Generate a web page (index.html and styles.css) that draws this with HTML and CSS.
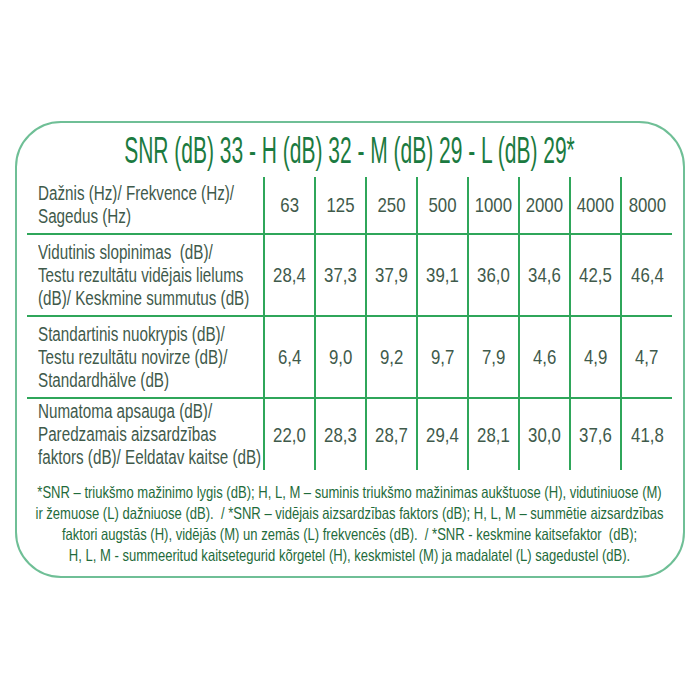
FILE: index.html
```html
<!DOCTYPE html>
<html>
<head>
<meta charset="utf-8">
<link rel="stylesheet" href="styles.css">
</head>
<body>
<div class="card">
  <div class="title"><h1 class="squeeze-title">SNR (dB) 33 - H (dB) 32 - M (dB) 29 - L (dB) 29*</h1></div>
  <table class="grid">
    <tr class="r-head">
      <td class="label"><div class="lbl">Dažnis (Hz)/ Frekvence (Hz)/<br>Sagedus (Hz)</div></td>
      <td><span class="num">63</span></td><td><span class="num">125</span></td><td><span class="num">250</span></td><td><span class="num">500</span></td><td><span class="num">1000</span></td><td><span class="num">2000</span></td><td><span class="num">4000</span></td><td><span class="num">8000</span></td>
    </tr>
    <tr class="r-tall">
      <td class="label"><div class="lbl">Vidutinis slopinimas &nbsp;(dB)/<br>Testu rezultātu vidējais lielums<br>(dB)/ Keskmine summutus (dB)</div></td>
      <td><span class="num">28,4</span></td><td><span class="num">37,3</span></td><td><span class="num">37,9</span></td><td><span class="num">39,1</span></td><td><span class="num">36,0</span></td><td><span class="num">34,6</span></td><td><span class="num">42,5</span></td><td><span class="num">46,4</span></td>
    </tr>
    <tr class="r-tall">
      <td class="label"><div class="lbl">Standartinis nuokrypis (dB)/<br>Testu rezultātu novirze (dB)/<br>Standardhälve (dB)</div></td>
      <td><span class="num">6,4</span></td><td><span class="num">9,0</span></td><td><span class="num">9,2</span></td><td><span class="num">9,7</span></td><td><span class="num">7,9</span></td><td><span class="num">4,6</span></td><td><span class="num">4,9</span></td><td><span class="num">4,7</span></td>
    </tr>
    <tr class="r-last">
      <td class="label"><div class="lbl">Numatoma apsauga (dB)/<br>Paredzamais aizsardzības<br>faktors (dB)/ Eeldatav kaitse (dB)</div></td>
      <td><span class="num">22,0</span></td><td><span class="num">28,3</span></td><td><span class="num">28,7</span></td><td><span class="num">29,4</span></td><td><span class="num">28,1</span></td><td><span class="num">30,0</span></td><td><span class="num">37,6</span></td><td><span class="num">41,8</span></td>
    </tr>
  </table>
  <div class="note"><p class="note-text">*SNR – triukšmo mažinimo lygis (dB); H, L, M – suminis triukšmo mažinimas aukštuose (H), vidutiniuose (M)<br>ir žemuose (L) dažniuose (dB). &nbsp;/ *SNR – vidējais aizsardzības faktors (dB); H, L, M – summētie aizsardzības<br>faktori augstās (H), vidējās (M) un zemās (L) frekvencēs (dB). &nbsp;/ *SNR - keskmine kaitsefaktor &nbsp;(dB);<br>H, L, M - summeeritud kaitsetegurid kõrgetel (H), keskmistel (M) ja madalatel (L) sagedustel (dB).</p></div>
</div>
</body>
</html>
```

FILE: styles.css
```css
html, body {
  margin: 0;
  padding: 0;
  background: #ffffff;
}
body {
  font-family: "Liberation Sans", Arial, sans-serif;
}
.card {
  box-sizing: border-box;
  margin: 121px 0 0 15px;
  width: 670px;
  height: 457px;
  border: 2px solid #6fbf96;
  border-radius: 46px;
  padding: 8px 11px 0 10px;
}
.title {
  display: flex;
  justify-content: center;
  height: 40px;
}
.squeeze-title {
  margin: 0;
  font-weight: normal;
  font-size: 36px;
  line-height: 40px;
  color: #1b7a40;
  white-space: nowrap;
  transform: scaleX(0.583);
  transform-origin: center;
}
.grid {
  margin-top: 6px;
  border-collapse: collapse;
  table-layout: fixed;
  width: 645px;
  color: #3f5a4b;
}
.grid td {
  padding: 0;
  text-align: center;
  vertical-align: middle;
}
.grid td + td {
  border-left: 2px solid #2fa65a;
}
.grid tr + tr td {
  border-top: 2px solid #2fa65a;
}
.grid td.label {
  width: 237px;
  text-align: left;
  padding-left: 11px;
  box-sizing: border-box;
}
.lbl {
  white-space: nowrap;
  font-size: 19.5px;
  line-height: 23px;
  transform: scaleX(0.78);
  transform-origin: left center;
}
.num {
  display: inline-block;
  white-space: nowrap;
  font-size: 21px;
  line-height: 24px;
  transform: scaleX(0.8);
  transform-origin: center;
}
.r-head td { height: 56px; }
.r-tall td { height: 80px; }
.r-last td { height: 71px; }
.note {
  display: flex;
  justify-content: center;
  margin-top: 12px;
}
.note-text {
  margin: 0;
  white-space: nowrap;
  text-align: center;
  font-size: 16.5px;
  line-height: 21px;
  color: #1f6b3b;
  transform: scaleX(0.79);
  transform-origin: center;
}
```
